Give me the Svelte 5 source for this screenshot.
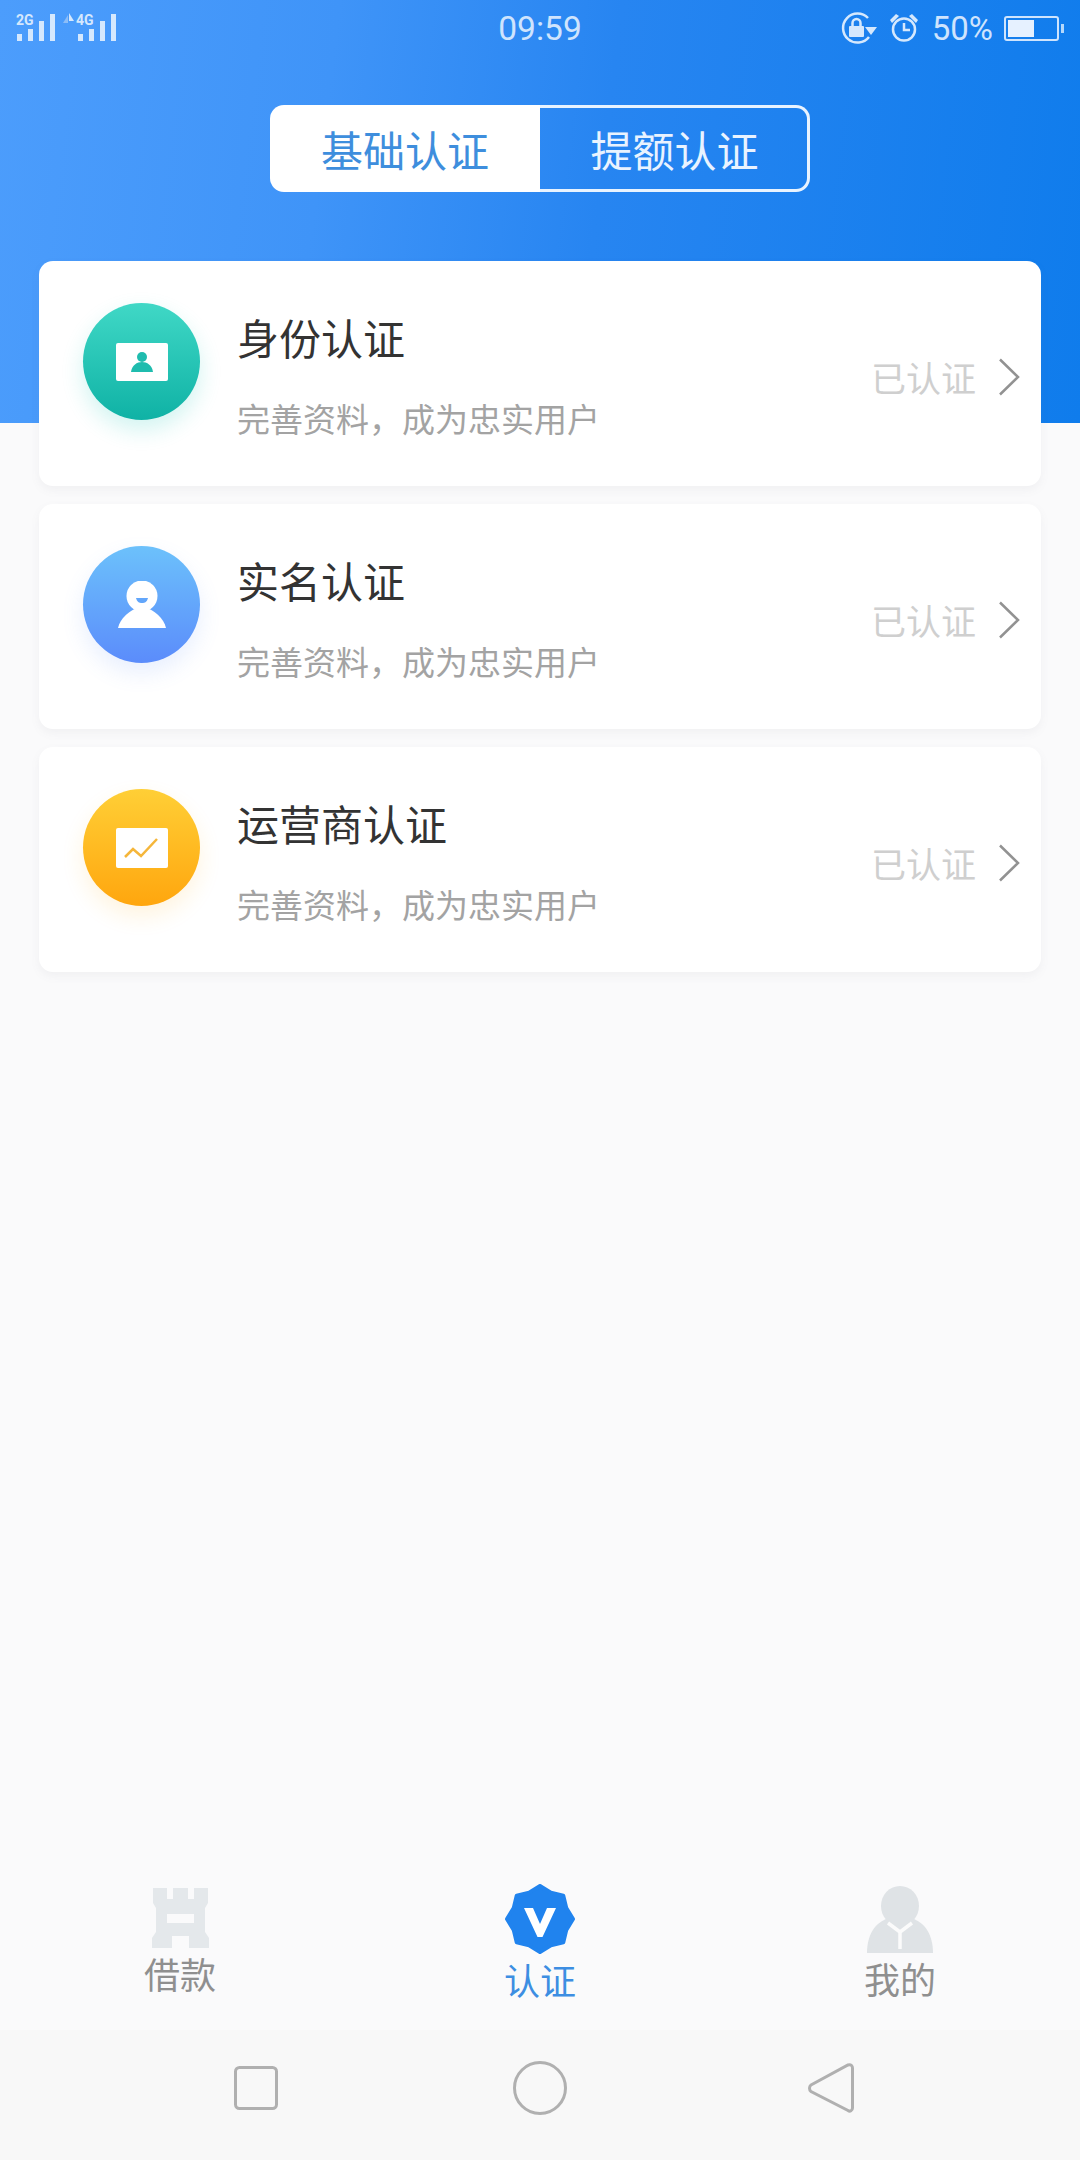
<script>
	let mode = $state('quota');
	let currentTab = $state('verify');

	const cards = [
		{ title: '身份认证', icon: 'id' },
		{ title: '实名认证', icon: 'person' },
		{ title: '运营商认证', icon: 'chart' }
	];

	const tabs = [
		{ id: 'loan', label: '借款' },
		{ id: 'verify', label: '认证' },
		{ id: 'mine', label: '我的' }
	];

	// scalloped badge outline, 8 points
	const badge = Array.from({ length: 16 }, (_, i) => {
		const r = i % 2 ? 28.5 : 33;
		const a = (i * Math.PI) / 8 - Math.PI / 2;
		return `${(35 + r * Math.cos(a)).toFixed(1)},${(35 + r * Math.sin(a)).toFixed(1)}`;
	}).join(' ');
</script>

<div class="page">
	<header class="hero">
		<div class="status">
			<svg class="signal" width="104" height="36" viewBox="0 -3 104 36">
				<text x="0" y="12" class="net">2G</text>
				<rect x="1" y="21" width="5" height="7" />
				<rect x="12" y="16" width="5" height="12" />
				<rect x="23" y="8" width="5" height="20" />
				<rect x="34" y="1" width="5" height="27" />
				<path class="dim" d="M47 10 L52 2 V10 Z" />
				<path d="M53 0 L58 8 H53 Z" />
				<text x="60" y="12" class="net">4G</text>
				<rect x="62" y="21" width="5" height="7" />
				<rect x="73" y="16" width="5" height="12" />
				<rect x="84" y="8" width="5" height="20" />
				<rect x="95" y="1" width="5" height="27" />
			</svg>
			<div class="time">09:59</div>
			<div class="status-right">
				<svg width="38" height="33" viewBox="0 0 38 33">
					<path class="line" d="M28 6 A14.500 14.500 0 1 0 29 25" />
					<path class="solid" d="M25 15 H37 L31 23 Z" />
					<rect class="solid" x="9" y="14" width="15" height="11" rx="1" />
					<path class="line" d="M12.500 14 V11 A4 4 0 0 1 20.500 11 V14" />
				</svg>
				<svg class="alarm" width="30" height="30" viewBox="0 0 30 30">
					<circle class="line" cx="15" cy="16.5" r="11" />
					<path class="line" d="M15 10 V17 H21" />
					<path class="solid" d="M1 7 L7 1 L10 3 L3 10 Z M29 7 L23 1 L20 3 L27 10 Z" />
				</svg>
				<span class="pct">50%</span>
				<div class="battery"><span class="level"></span></div>
				<span class="nub"></span>
			</div>
		</div>

		<div class="segment">
			<button class="seg on">基础认证</button>
			<button class="seg" onclick={() => (mode = 'quota')}>提额认证</button>
		</div>
	</header>

	<section class="list">
		{#each cards as card}
			<div class="card">
				<div class="avatar {card.icon}">
					{#if card.icon === 'id'}
						<svg width="52" height="38" viewBox="0 0 52 38">
							<rect width="52" height="38" rx="2" fill="#fff" />
							<circle cx="26" cy="14" r="5" fill="#1fbcae" />
							<path d="M15 29 C16 22 21 19 26 19 C31 19 36 22 37 29 Z" fill="#1fbcae" />
						</svg>
					{:else if card.icon === 'person'}
						<svg width="50" height="48" viewBox="0 0 50 48">
							<circle cx="25" cy="15" r="15.5" fill="#fff" />
							<path d="M25 26 C12 28 3 38 1 47 H49 C47 38 38 28 25 26 Z" fill="#fff" />
							<path d="M19 17 H31 C30 21 28 22 25 22 C22 22 20 21 19 17 Z" fill="#62a6fb" />
						</svg>
					{:else}
						<svg width="52" height="40" viewBox="0 0 52 40">
							<rect width="52" height="40" rx="2" fill="#fff" />
							<path d="M9 29 L17 21 L25 28 L41 11" fill="none" stroke="#f5b63a" stroke-width="2.5" />
						</svg>
					{/if}
				</div>
				<div class="info">
					<div class="title">{card.title}</div>
					<div class="desc">完善资料，成为忠实用户</div>
				</div>
				<div class="state">已认证</div>
				<svg class="chevron" width="22" height="38" viewBox="0 0 22 38">
					<path d="M2 1.5 L20 19 L2 36.5" fill="none" stroke="#929292" stroke-width="2.5" />
				</svg>
			</div>
		{/each}
	</section>

	<nav class="tabbar">
		{#each tabs as tab}
			<button class="tab {tab.id}" class:active={currentTab === tab.id} onclick={() => (currentTab = tab.id)}>
				{#if tab.id === 'loan'}
					<svg width="57" height="60" viewBox="0 0 57 60">
						<path
							fill="#e4e8eb"
							fill-rule="evenodd"
							d="M1 0 H15 V11 H21 V0 H36 V11 H42 V0 H56 V15 L53 20 V44 L57 50 V60 H37 V48 H20 V60 H0 V50 L4 44 V20 L1 15 Z M15 26 V35 H42 V26 Z"
						/>
					</svg>
				{:else if tab.id === 'verify'}
					<svg width="70" height="70" viewBox="0 0 70 70">
						<polygon points={badge} fill="#2083ee" stroke="#2083ee" stroke-width="4" stroke-linejoin="round" />
						<path d="M19 24 H28 L35 40 L42 24 H51 L37.500 53 H32.500 Z" fill="#fff" />
					</svg>
				{:else}
					<svg width="66" height="68" viewBox="0 0 66 68">
						<ellipse cx="33" cy="21" rx="19" ry="20" fill="#dfe3e6" />
						<path d="M22 33 C8 37 0 50 0 68 H66 C66 50 58 37 44 33 Z" fill="#dfe3e6" />
						<path d="M21 38 L33 47 L45 38 M33 47 V64" fill="none" stroke="#fbfbfb" stroke-width="3.5" />
					</svg>
				{/if}
				<span class="label">{tab.label}</span>
			</button>
		{/each}
	</nav>

	<div class="navbar">
		<svg width="44" height="44" viewBox="0 0 44 44">
			<rect x="1.5" y="1.5" width="41" height="41" rx="4" />
		</svg>
		<svg width="54" height="54" viewBox="0 0 54 54">
			<circle cx="27" cy="27" r="25.5" />
		</svg>
		<svg class="back" width="46" height="50" viewBox="0 0 46 50">
			<path d="M40 2 C43 1 44.500 3 44.500 5 V45 C44.500 47.500 42 49 40 47.500 L3 28.500 C1 27 1 23.500 3 22 Z" />
		</svg>
	</div>
</div>

<style>
	:global(body) {
		margin: 0;
		background: #fafafb;
	}

	.page {
		display: flex;
		flex-direction: column;
		height: 2160px;
		font-family: 'Noto Sans CJK SC', 'Noto Sans', sans-serif;
		overflow: hidden;
	}

	.hero {
		height: 423px;
		flex-shrink: 0;
		background: linear-gradient(97deg, #4c9dfc 0%, #3f94f8 30%, #2785f1 55%, #0f7cec 100%);
	}

	.status {
		display: grid;
		grid-template-columns: 1fr auto 1fr;
		align-items: center;
		height: 56px;
		padding: 0 14px;
		color: #dcecff;
	}

	.signal {
		margin-left: 2px;
		fill: #d5e8fd;
	}

	.signal .dim {
		fill: #8cbdf7;
	}

	.net {
		font-family: 'Roboto', sans-serif;
		font-size: 14px;
		font-weight: 700;
	}

	.time {
		font-family: 'Roboto', sans-serif;
		font-size: 33.5px;
		color: #cfe4fd;
	}

	.status-right {
		display: flex;
		align-items: center;
		justify-content: flex-end;
	}

	.status-right .line {
		fill: none;
		stroke: #d5e8fd;
		stroke-width: 2.5;
	}

	.status-right .solid {
		fill: #d5e8fd;
	}

	.alarm {
		margin-left: 11px;
	}

	.pct {
		font-family: 'Roboto', sans-serif;
		font-size: 33px;
		color: #cfe4fd;
		margin-left: 13px;
	}

	.battery {
		box-sizing: border-box;
		width: 55px;
		height: 25px;
		margin-left: 11px;
		padding: 2px;
		border: 2px solid #cfe4fd;
		border-radius: 3px;
	}

	.level {
		display: block;
		width: 26px;
		height: 100%;
		background: #e6f1ff;
	}

	.nub {
		width: 3px;
		height: 9px;
		margin-left: 2px;
		margin-right: 2px;
		background: #b5d8fb;
	}

	.segment {
		display: flex;
		width: 540px;
		height: 87px;
		margin: 49px auto 0;
	}

	.seg {
		box-sizing: border-box;
		width: 50%;
		padding: 0 0 0 2px;
		border: 3px solid #e8f3ff;
		border-radius: 0 14px 14px 0;
		border-left: 0;
		background: transparent;
		color: #e9f3ff;
		font-family: inherit;
		font-size: 42px;
		line-height: 78px;
	}

	.seg.on {
		padding: 0;
		border: 0;
		border-radius: 14px 0 0 14px;
		background: #fff;
		color: #3e8edd;
	}

	.list {
		display: flex;
		flex-direction: column;
		gap: 18px;
		margin: -162px 39px 0;
		position: relative;
	}

	.card {
		display: flex;
		align-items: flex-start;
		height: 225px;
		padding: 42px 21px 0 44px;
		box-sizing: border-box;
		background: #fff;
		border-radius: 14px;
		box-shadow: 0 4px 10px rgba(120, 120, 130, 0.07);
	}

	.avatar {
		display: flex;
		align-items: center;
		justify-content: center;
		flex-shrink: 0;
		width: 117px;
		height: 117px;
		border-radius: 50%;
	}

	.avatar.id {
		background: linear-gradient(180deg, #40d8c6, #0fb2a5);
		box-shadow: 0 10px 22px rgba(30, 200, 185, 0.2);
	}

	.avatar.person {
		background: linear-gradient(180deg, #6cc1fb, #5b8cfb);
		box-shadow: 0 10px 22px rgba(90, 140, 250, 0.14);
	}

	.avatar.chart {
		background: linear-gradient(180deg, #ffcf36, #ffa60e);
		box-shadow: 0 10px 22px rgba(255, 180, 30, 0.14);
	}

	.info {
		flex: 1;
		margin-left: 37px;
	}

	.title {
		margin-top: 3px;
		height: 62px;
		font-size: 42px;
		line-height: 62px;
		color: #333;
	}

	.desc {
		margin-top: 26px;
		font-size: 33px;
		line-height: 48px;
		color: #a3a3a3;
	}

	.state {
		margin-top: 49px;
		font-size: 35px;
		line-height: 50px;
		color: #cfcfcf;
	}

	.chevron {
		margin: 55px 0 0 22px;
	}

	.tabbar {
		display: flex;
		align-items: flex-start;
		margin-top: auto;
		height: 146px;
	}

	.tab {
		display: flex;
		flex-direction: column;
		align-items: center;
		flex: 1;
		padding: 0;
		border: 0;
		background: none;
		font-family: inherit;
	}

	.tab.loan {
		padding-top: 4px;
	}

	.tab.mine {
		padding-top: 1px;
	}

	.tab svg {
		display: block;
	}

	.label {
		margin-top: 6px;
		font-size: 36px;
		line-height: 38px;
		color: #8f8f8f;
	}

	.tab.active .label {
		color: #3d8ee2;
	}

	.navbar {
		display: flex;
		align-items: center;
		gap: 235px;
		height: 130px;
		padding: 0 0 14px 234px;
		box-sizing: border-box;
		background: #f8f8f8;
	}

	.back {
		margin-left: 6px;
	}

	.navbar svg {
		fill: none;
		stroke: #b0b0b0;
		stroke-width: 3;
	}
</style>
